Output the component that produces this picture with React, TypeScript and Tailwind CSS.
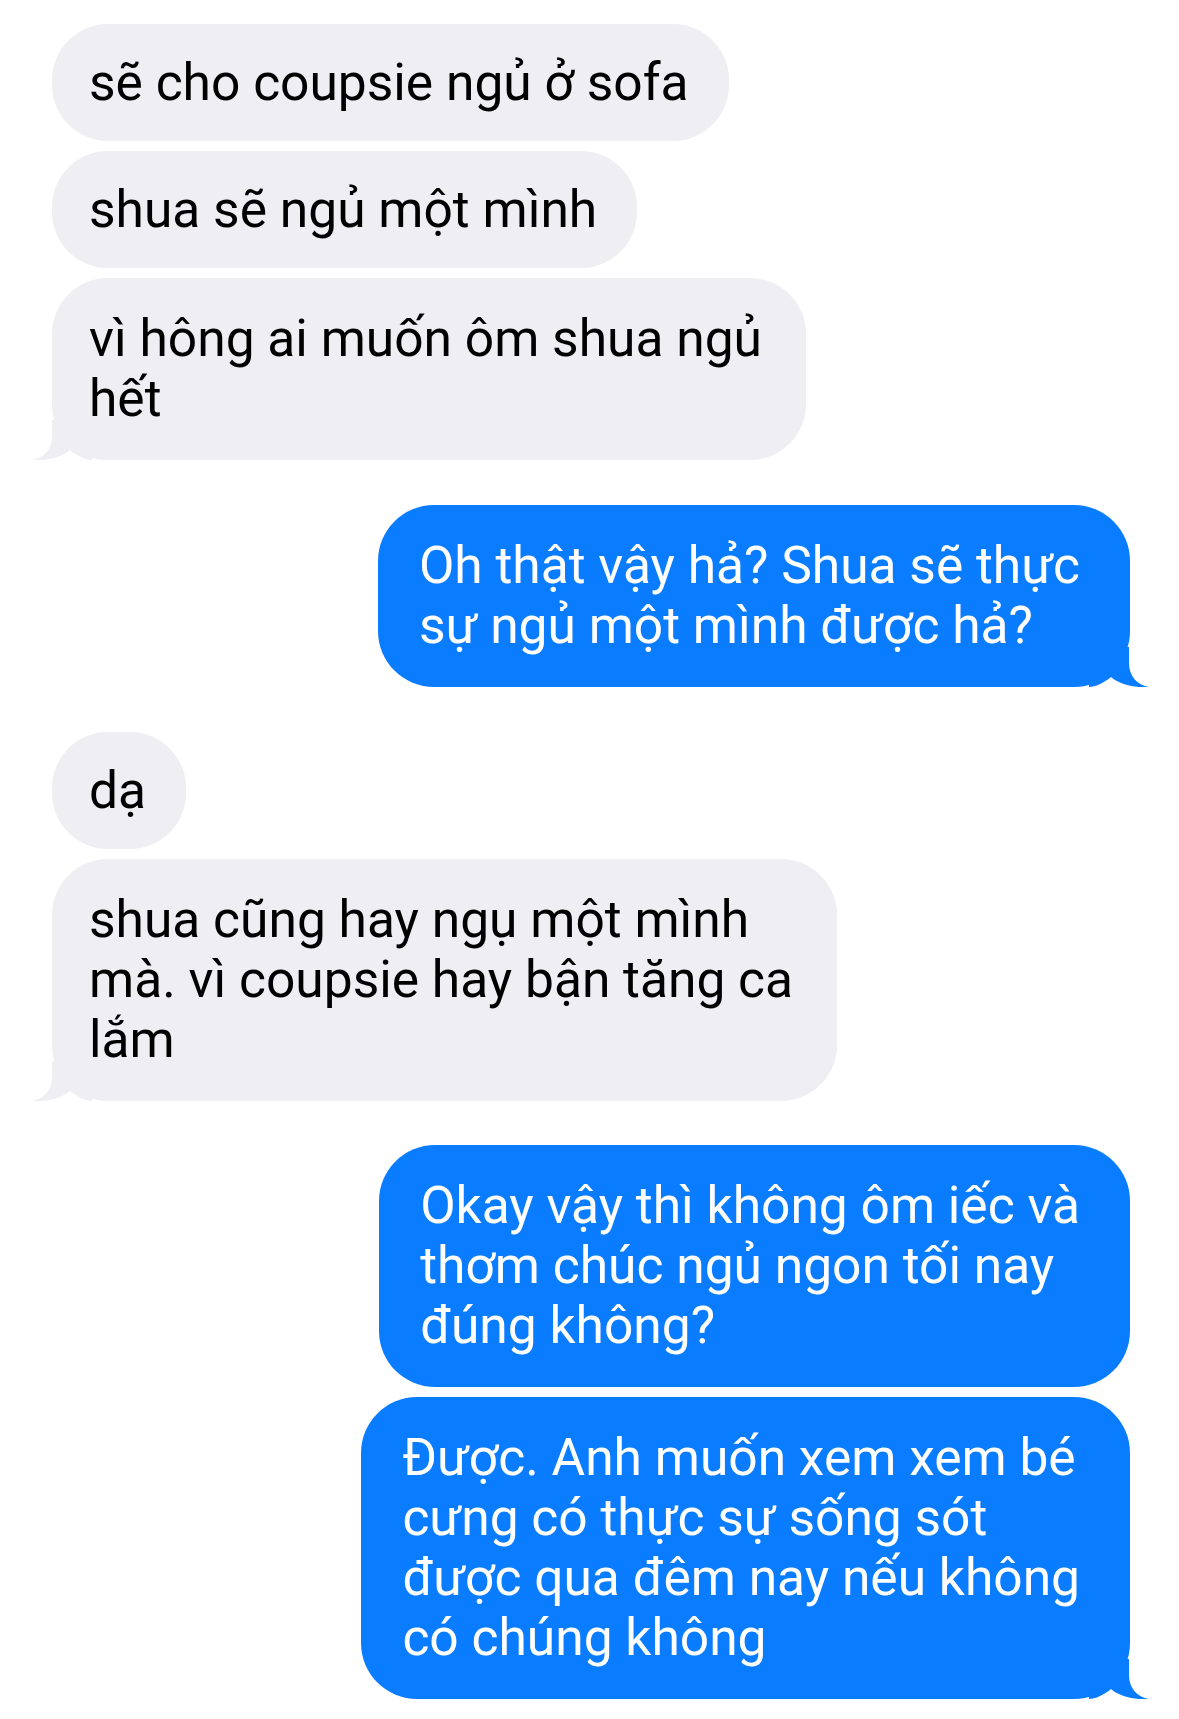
import type { ReactNode } from "react"

function Tail({ side, color }: { side: "left" | "right"; color: string }) {
  return (
    <svg
      width="60"
      height="40"
      viewBox="0 0 60 40"
      className={
        side === "left"
          ? "absolute -left-[20px] bottom-0"
          : "absolute -right-[19px] bottom-0 -scale-x-100"
      }
    >
      <path d="M20,0 L20,16 C20,29 12,38 0,40 C13,41 29,38 38,30 C45,36 54,40 60,40 L60,0 Z" fill={color} />
    </svg>
  )
}

// multi-line bubbles get a touch more padding and tighter leading, like the screenshot
function Received({ children, tail, multi }: { children: ReactNode; tail?: boolean; multi?: boolean }) {
  return (
    <div className="flex justify-start">
      <div
        className={
          multi
            ? "relative rounded-[56px] bg-[#eeeef3] py-[31px] pl-[37px] pr-[44px] leading-[60px] text-black"
            : "relative rounded-[56px] bg-[#eeeef3] py-[28px] pl-[37px] pr-[40px] text-black"
        }
      >
        <p className="whitespace-nowrap">{children}</p>
        {tail && <Tail side="left" color="#eeeef3" />}
      </div>
    </div>
  )
}

function Sent({ children, tail }: { children: ReactNode; tail?: boolean }) {
  return (
    <div className="flex justify-end">
      <div className="relative rounded-[56px] bg-[#0a7cff] py-[31px] pl-[41px] pr-[50px] leading-[60px] text-white">
        <p className="whitespace-nowrap">{children}</p>
        {tail && <Tail side="right" color="#0a7cff" />}
      </div>
    </div>
  )
}

export default function App() {
  return (
    <div
      className="min-h-screen bg-white pt-[24px] pl-[52px] pr-[49px] text-[51.5px] leading-[61px]"
      style={{ fontFamily: "Roboto, 'Noto Sans', sans-serif" }}
    >
      <div className="flex flex-col gap-[10px]">
        <Received>sẽ cho coupsie ngủ ở sofa</Received>
        <Received>shua sẽ ngủ một mình</Received>
        <Received tail multi>
          vì hông ai muốn ôm shua ngủ
          <br />
          hết
        </Received>
      </div>

      <div className="mt-[45px] flex flex-col gap-[11px]">
        <Sent tail>
          Oh thật vậy hả? Shua sẽ thực
          <br />
          sự ngủ một mình được hả?
        </Sent>
      </div>

      <div className="mt-[45px] flex flex-col gap-[10px]">
        <Received>dạ</Received>
        <Received tail multi>
          shua cũng hay ngụ một mình
          <br />
          mà. vì coupsie hay bận tăng ca
          <br />
          lắm
        </Received>
      </div>

      <div className="mt-[44px] flex flex-col gap-[10px]">
        <Sent>
          Okay vậy thì không ôm iếc và
          <br />
          thơm chúc ngủ ngon tối nay
          <br />
          đúng không?
        </Sent>
        <Sent tail>
          Được. Anh muốn xem xem bé
          <br />
          cưng có thực sự sống sót
          <br />
          được qua đêm nay nếu không
          <br />
          có chúng không
        </Sent>
      </div>
    </div>
  )
}
